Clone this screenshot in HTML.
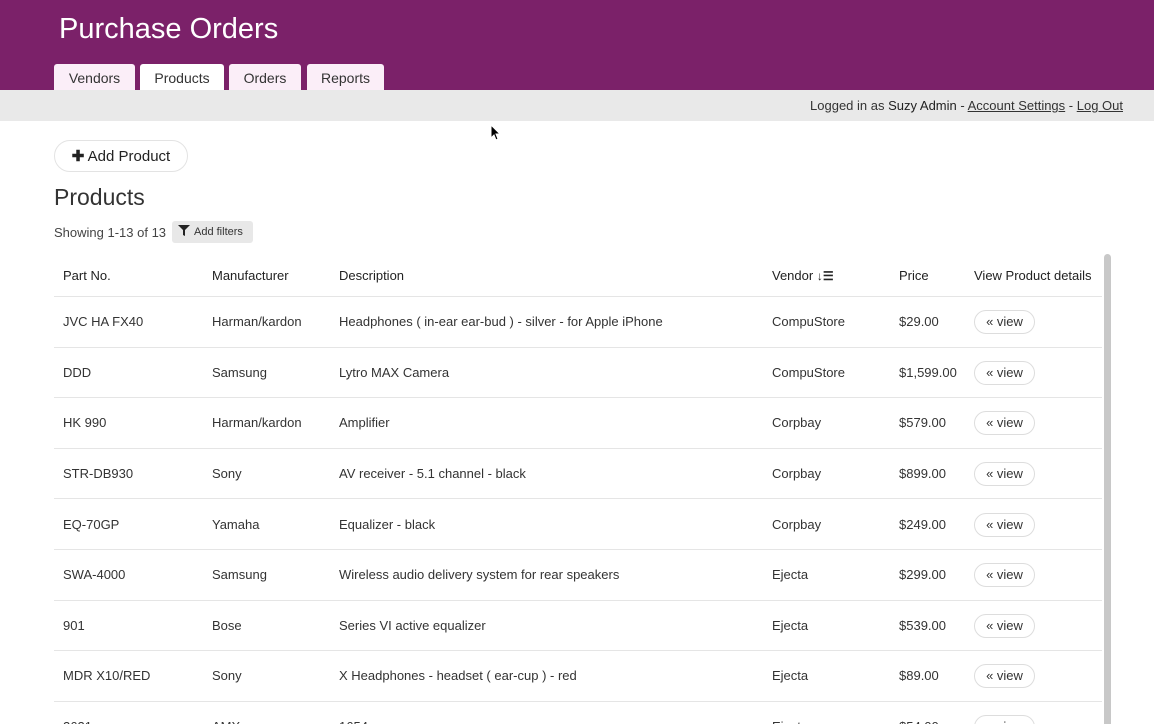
<!DOCTYPE html>
<html style="overflow:hidden;height:724px"><head><style>
body{margin:0;width:1154px;height:724px;overflow:hidden;background:#fff;font-family:"Liberation Sans",sans-serif;color:#333;position:relative}
.hdr{position:absolute;left:0;top:0;width:1154px;height:90px;background:#7b2169}
.title{position:absolute;left:59px;top:13px;font-size:29px;color:#fff}
.tab{position:absolute;top:64px;height:26px;background:#fbeef8;border-radius:3px 3px 0 0;font-size:14px;line-height:28px;text-align:center;color:#333}
.bar{position:absolute;top:90px;left:0;width:1154px;height:31px;background:#e9e9e9;font-size:13px;line-height:32px}
.bar .r{position:absolute;right:31px}
.bar u{color:#333}
.btn{position:absolute;left:54px;top:140px;width:132px;height:30px;border:1px solid #e3e3e3;border-radius:16px;font-size:15px;line-height:31px;text-align:center;color:#222}
h2{position:absolute;left:54px;top:184px;margin:0;font-weight:normal;font-size:23px;color:#333}
.show{position:absolute;left:54px;top:225px;font-size:13px;color:#444}
.filt{position:absolute;left:172px;top:221px;width:81px;height:22px;background:#e8e8e8;border-radius:3px;font-size:11px;line-height:22px}
table{position:absolute;left:54px;top:255px;width:1048px;border-collapse:collapse;font-size:13px}
td,th{padding:0 0 0 9px;text-align:left;font-weight:normal;height:49.6px;border-bottom:1px solid #e5e5e5;color:#333}
th{height:41px;color:#222}
.v{display:inline-block;width:59px;height:22px;border:1px solid #ddd;border-radius:12px;text-align:center;line-height:22px;font-size:13px;margin-top:1px}
.sb{position:absolute;left:1104px;top:254px;width:7px;height:480px;background:#c8c8c8;border-radius:4px}
</style></head><body>
<div class="hdr"><div class="title">Purchase Orders</div>
<div class="tab" style="left:54px;width:81px">Vendors</div>
<div class="tab" style="left:140px;width:84px;background:#fff">Products</div>
<div class="tab" style="left:229px;width:72px">Orders</div>
<div class="tab" style="left:307px;width:77px">Reports</div></div>
<div class="bar"><span class="r">Logged in as <b style="font-weight:normal;color:#222">Suzy Admin</b> - <u>Account Settings</u> - <u>Log Out</u></span></div>
<div class="btn"><b>✚</b> Add Product</div>
<h2>Products</h2>
<div class="show">Showing 1-13 of 13</div>
<div class="filt"><svg width="12" height="11" viewBox="0 0 12 11" style="margin:0 4px 0 6px;vertical-align:-1px"><path d="M0 0h12L7 5v6L5 10V5z" fill="#222"/></svg>Add filters</div>
<table>
<tr><th style="width:140px">Part No.</th><th style="width:118px">Manufacturer</th><th style="width:424px">Description</th><th style="width:118px">Vendor <b style="font-size:12px">↓☰</b></th><th style="width:66px">Price</th><th>View Product details</th></tr>
<tr><td>JVC HA FX40</td><td>Harman/kardon</td><td>Headphones ( in-ear ear-bud ) - silver - for Apple iPhone</td><td>CompuStore</td><td>$29.00</td><td><span class="v">« view</span></td></tr>
<tr><td>DDD</td><td>Samsung</td><td>Lytro MAX Camera</td><td>CompuStore</td><td>$1,599.00</td><td><span class="v">« view</span></td></tr>
<tr><td>HK 990</td><td>Harman/kardon</td><td>Amplifier</td><td>Corpbay</td><td>$579.00</td><td><span class="v">« view</span></td></tr>
<tr><td>STR-DB930</td><td>Sony</td><td>AV receiver - 5.1 channel - black</td><td>Corpbay</td><td>$899.00</td><td><span class="v">« view</span></td></tr>
<tr><td>EQ-70GP</td><td>Yamaha</td><td>Equalizer - black</td><td>Corpbay</td><td>$249.00</td><td><span class="v">« view</span></td></tr>
<tr><td>SWA-4000</td><td>Samsung</td><td>Wireless audio delivery system for rear speakers</td><td>Ejecta</td><td>$299.00</td><td><span class="v">« view</span></td></tr>
<tr><td>901</td><td>Bose</td><td>Series VI active equalizer</td><td>Ejecta</td><td>$539.00</td><td><span class="v">« view</span></td></tr>
<tr><td>MDR X10/RED</td><td>Sony</td><td>X Headphones - headset ( ear-cup ) - red</td><td>Ejecta</td><td>$89.00</td><td><span class="v">« view</span></td></tr>
<tr><td>2621</td><td>AMX</td><td>1654</td><td>Ejecta</td><td>$54.00</td><td><span class="v">« view</span></td></tr>
</table>
<div class="sb"></div>
<svg style="position:absolute;left:490px;top:124px" width="11" height="17" viewBox="0 0 11 17"><path d="M1 1v13l3-3 2 5 2-1-2-5h4z" fill="#000" stroke="#fff"/></svg>
</body></html>
